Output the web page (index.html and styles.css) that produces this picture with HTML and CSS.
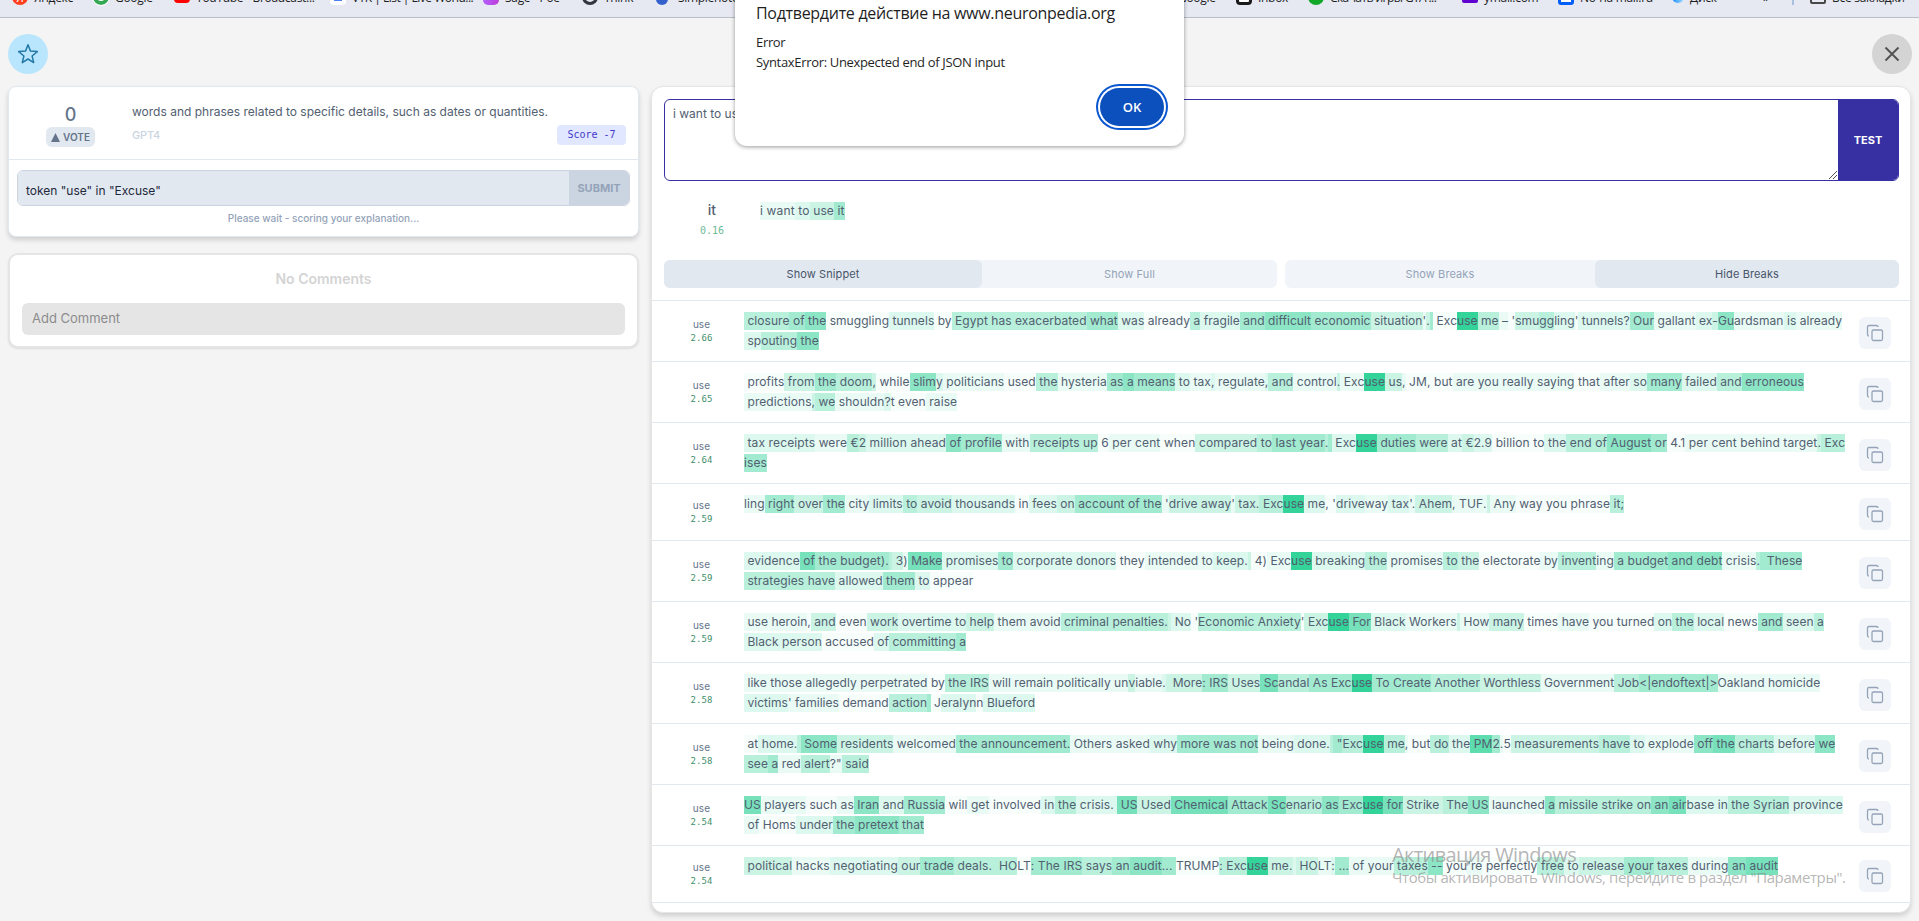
FILE: index.html
```
<!DOCTYPE html>
<html lang="en">
<head>
    <meta charset="UTF-8">
    <meta name="viewport" content="width=device-width, initial-scale=1.0">
    <title>Neuronpedia</title>
    <link rel="stylesheet" href="styles.css">
</head>
<body>
    <div class="bookmarks">
        <span class="mark m1"><i class="dot red">Я</i>Яндекс</span>
        <span class="mark m2"><i class="dot google"></i>Google</span>
        <span class="mark m3"><i class="dot youtube"></i>YouTube - Broadcast...</span>
        <span class="mark m4"><i class="dot vtk"></i>VTK | List | Live World...</span>
        <span class="mark m5"><i class="dot sage"></i>Sage - Poe</span>
        <span class="mark m6"><i class="dot think"></i>Think</span>
        <span class="mark m7"><i class="dot simple"></i>Simplenote</span>
        <span class="mark m8">Google</span>
        <span class="mark m9"><i class="dot inbox"></i>Inbox</span>
        <span class="mark m10"><i class="dot green"></i>Скачать игры GTA ...</span>
        <span class="mark m11"><i class="dot purple"></i>ymail.com</span>
        <span class="mark m12"><i class="dot mail"></i>No-на mail.ru</span>
        <span class="mark m13"><i class="dot disk"></i>Диск</span>
        <span class="mark m14">»</span>
        <span class="mark m15"></span>
        <span class="mark m16"><i class="dot folder"></i>Все закладки</span>
    </div>

    <div class="topbar">
        <button class="round star">
            <svg width="24" height="24" viewBox="0 0 24 24" fill="none" stroke="currentColor" stroke-width="1.5" stroke-linejoin="round"><path d="M12 2.8l2.5 6.3 6.8.5-5.2 4.4 1.6 6.6L12 17l-5.7 3.6 1.6-6.6-5.2-4.4 6.8-.5z"/></svg>
        </button>
        <button class="round close">
            <svg width="24" height="24" viewBox="0 0 24 24" fill="none" stroke="currentColor" stroke-width="1.9"><path d="M5.5 5.5l13 13M18.5 5.5l-13 13"/></svg>
        </button>
    </div>

    <div class="page">
        <div class="left">
            <div class="card explain">
                <div class="explain-top">
                    <div class="votes">
                        <div class="count">0</div>
                        <button class="vote"><svg width="9" height="9" viewBox="0 0 9 9"><path fill="currentColor" d="M4.5 0L9 9H0z"/></svg>VOTE</button>
                    </div>
                    <div class="explain-text">
                        <div class="desc">words and phrases related to specific details, such as dates or quantities.</div>
                        <div class="explain-meta"><span class="author">GPT4</span><span class="score">Score -7</span></div>
                    </div>
                </div>
                <div class="explain-bottom">
                    <div class="submit-row">
                        <div class="field">token "use" in "Excuse"</div>
                        <button class="submit">SUBMIT</button>
                    </div>
                    <div class="wait">Please wait - scoring your explanation...</div>
                </div>
            </div>
            <div class="card comments">
                <div class="no-comments">No Comments</div>
                <div class="add-comment">Add Comment</div>
            </div>
        </div>

        <div class="card right">
            <div class="test-row">
                <div class="test-field">i want to use it
                    <svg class="grip" width="10" height="10" viewBox="0 0 10 10" stroke="#555" stroke-width="1"><path d="M1 9l8-8M5 9l4-4"/></svg>
                </div>
                <button class="test">TEST</button>
            </div>
            <div class="result">
                <div class="result-label"><div class="result-token">it</div><div class="result-value">0.16</div></div>
                <div class="line"><span class="h1">i want</span><span class="h2"> to</span><span class="h3"> use</span><span class="h5"> it</span></div>
            </div>
            <div class="tabs">
                <div class="tab-group first"><button class="on">Show Snippet</button><button>Show Full</button></div>
                <div class="tab-group second"><button>Show Breaks</button><button class="on">Hide Breaks</button></div>
            </div>
            <div id="rows"></div>
        </div>
    </div>

    <div class="dialog">
        <div class="dialog-title">Подтвердите действие на www.neuronpedia.org</div>
        <div class="dialog-text">Error<br>SyntaxError: Unexpected end of JSON input</div>
        <button class="ok">OK</button>
    </div>

    <div class="watermark">
        <div class="watermark-title">Активация Windows</div>
        <div class="watermark-text">Чтобы активировать Windows, перейдите в раздел "Параметры".</div>
    </div>

    <script>
        // each token is its highlight level (0-9) followed by the text, tokens are split by ~
        const rows = [
            ['2.66',
                "4 closure~5 of~6 the~0 smuggling~2 tunnels~0 by~4 Egypt~4 has exacerbated~5 what~2 was~0 already~4 a~2 fragile~5 and~6 difficult~5 economic~3 situation~1'~3.~5 ~0 ~0Exc~9use~4 me~1 –~0 '~3smu~4gg~2ling~0'~2 tunnels?~5 Our~1 gallant~2 ex~3-~6Gu~1ardsman~2 is~1 already",
                "2 sp~4outing~6 the"],
            ['2.65',
                "0 profits~3 from~5 the~4 doom~3,~0 while~6 slim~2y~1 politicians~0 used~4 the~1 hysteria~5 as~6 a~5 means~2 to~1 tax~2,~1 regulate~2,~4 and~1 control~3.~1 Exc~9use~3 us~1,~0 JM,~0 but~1 are you really saying~0 that~1 after~2 so~5 many~2 failed~4 and~6 erroneous",
                "1 predictions~3,~4 we~1 shouldn~2?~0t even~1 raise"],
            ['2.64',
                "2 tax receipts~1 were~4 €~32~2 million ahead~6 of~5 profile~1 with~4 receipts~4 up~0 6~1 per cent~0 when~3 compared~4 to~5 last~5 year~4.~5 ~2 Exc~9use~5 duties~4 were~2 at~3 €~22.9~0 billion~0 to~2 the~4 end of~6 August~5 or~0 4.1~1 per cent~1 behind target~3.~4 Exc",
                "5ises"],
            ['2.59',
                "1ling~5 right~3 over~5 the~1 city~2 limits~4 to~3 avoid~2 thousands~0 in~2 fees~3 on~5 account~5 of~5 the~1 '~3drive away~1'~3 tax.~4 Exc~9use~2 me~0,~0 '~2drive~1way~2 tax~1'.~3 Ahem~1,~1 TUF~1.~3 ~1 Any~0 way you phrase~4 it;"],
            ['2.59',
                "2 evidence~7 of~5 the budget~5).~4 ~3 3~1)~7 Make~2 promises~5 to~2 corporate~2 donors~0 they~1 intended to~2 keep.~3 ~0 4)~1 Exc~9use~2 breaking~4 the~1 promises~4 to~3 the~0 electorate~1 by~4 invent~1ing~5 a~5 budget~6 and debt~1 crisis~4.~5  These",
                "4 strategies~4 have~2 allowed~5 them~2 to~0 appear"],
            ['2.59',
                "1 use heroin~0,~3 and~0 even~3 work~2 overtime~2 to~3 help~1 them~1 avoid~4 criminal~4 penalties.~3 ~2 No~0 '~4Economic~4 Anxiety~0'~3 Exc~9use~7 For~2 Black~1 Workers~3 ~1 How~3 many~0 times~1 have~0 you turned~2 on~4 the~2 local~0 news~5 and~2 seen~4 a",
                "2 Black~2 person~0 accused~2 of~4 committing~5 a"],
            ['2.58',
                "1 like~1 those allegedly perpetrated~0 by~4 the~4 IRS~1 will remain politically~1 un~3v~1iable~2.~3  More~5:~5 IRS~3 Uses~7 Sc~4andal~5 As~5 Exc~9use~5 To~5 Create~4 Another~3 Worthless~1 Government~4 Job~5<|endoftext|>~1Oakland homicide",
                "2 victims~1' families~0 demand~4 action~5 ~0 J~2eralyn~0n~2 Blueford"],
            ['2.58',
                "0 at~2 home.~4 ~6 Some~3 residents~1 welcomed~5 the~5 announcement.~1 Others asked~2 why~5 more~5 was not~1 being~2 done.~4 ~5 \"~4Exc~9use~4 me~1,~0 but~4 do~2 the~8 PM~52~1.~05~3 measurements~4 have~2 to~1 explode~6 off~7 the~4 charts~2 before~6 we",
                "4 see~5 a~1 red~4 alert~1?\"~4 said"],
            ['2.54',
                "7US~1 players~0 such~1 as~6 Iran~2 and~5 Russia~0 will~1 get~0 involved~2 in~4 the~2 crisis.~2 ~7 US~3 Used~7 Chemical~5 Attack~7 Sc~4enario~6 as~5 Exc~9use~7 for~3 Strike~3 ~4 The~6 US~1 launched~6 a~4 missile~4 strike~4 on~6 an~7 air~2base~2 in~4 the~4 Syrian~2 province",
                "1 of~0 Homs~2 under~5 the~6 pretext~5 that"],
            ['2.54',
                "3 political~1 hacks~2 negotiating~3 our~5 trade~4 deals.~4  HO~0LT~5:~5 The IRS~4 says~5 an~6 audit~5...~5 ~0TRUMP~4:~4 Exc~9use~3 me.~2 ~3 HO~1LT~2:~5 ...~1 of your~4 taxes~6 --~0 you~1're~0 perfectly~4 free~2 to~3 release~5 your~4 taxes~1 during~6 an~7 audit"]
        ];
        const copyIcon = '<svg width="18" height="18" viewBox="0 0 24 24" fill="none" stroke="currentColor" stroke-width="1.7" stroke-linejoin="round"><rect x="8" y="8" width="14" height="14" rx="2"/><path d="M4 16c-1.1 0-2-.9-2-2V4c0-1.1.9-2 2-2h10c1.1 0 2 .9 2 2"/></svg>';

        function escapeText(text) {
            return text.replace(/&/g, '&amp;').replace(/</g, '&lt;');
        }

        function makeLine(line) {
            const spans = line.split('~').map(t => '<span class="h' + t[0] + '">' + escapeText(t.slice(1)) + '</span>');
            return '<div class="line">' + spans.join('') + '</div>';
        }

        document.getElementById('rows').innerHTML = rows.map(row =>
            '<div class="row"><div class="act"><div>use</div><div class="value">' + row[0] + '</div></div>' +
            '<div class="snippet">' + row.slice(1).map(makeLine).join('') + '</div>' +
            '<button class="copy">' + copyIcon + '</button></div>'
        ).join('');
    </script>
</body>
</html>
```
FILE: styles.css
```
* {
    box-sizing: border-box;
}
body {
    margin: 0;
    height: 921px;
    overflow: hidden;
    position: relative;
    font-family: Inter, sans-serif;
    font-size: 12px;
    color: #526071;
    background-color: #f4f4f4;
}
button {
    font-family: inherit;
    border: none;
    padding: 0;
    cursor: pointer;
}
/* bookmarks bar, cut by the top of the window */
.bookmarks {
    position: relative;
    height: 18px;
    overflow: hidden;
    background-color: #e6e9f2;
    border-bottom: 1px solid #b9bec6;
    font-family: "Open Sans", "Noto Sans", sans-serif;
    font-size: 12px;
    letter-spacing: -0.3px;
    color: #1f1f1f;
}
.mark {
    position: absolute;
    top: -11px;
    height: 18px;
    line-height: 18px;
    white-space: nowrap;
    display: flex;
    gap: 6px;
}
.m1 { left: 12px; }
.m2 { left: 93px; }
.m3 { left: 174px; }
.m4 { left: 330px; letter-spacing: -0.5px; }
.m5 { left: 483px; }
.m6 { left: 582px; }
.m7 { left: 656px; }
.m8 { left: 1178px; }
.m9 { left: 1236px; }
.m10 { left: 1308px; letter-spacing: -0.6px; }
.m11 { left: 1462px; }
.m12 { left: 1558px; }
.m13 { left: 1672px; }
.m14 { left: 1763px; }
.m15 { left: 1792px; width: 2px; height: 16px; background-color: #a8c0dd; }
.m16 { left: 1810px; }
.dot {
    width: 16px;
    height: 16px;
    border-radius: 8px;
    font-style: normal;
    color: white;
    text-align: center;
    line-height: 17px;
}
.red { background-color: #fc3f1d; }
.google { background-color: white; border: 4px solid #34a853; outline: 1px solid white; }
.youtube { background-color: #ff0000; height: 14px; border-radius: 4px; }
.vtk { background-color: #4f7df5; border: 4px solid white; border-radius: 4px; }
.sage { background: linear-gradient(90deg, #b061ff, #c03bd8); border-radius: 5px; }
.think { background-color: #e6e9f2; border: 3px solid #33363c; }
.simple { background-color: #3361cc; width: 12px; margin-right: 4px; }
.inbox { background-color: white; border: 3px solid #1b1b1b; border-radius: 4px; }
.green { background-color: #12a928; }
.purple { background-color: #6001d2; border-radius: 2px; height: 14px; }
.mail { background-color: white; border: 3px solid #005ff9; border-radius: 3px; }
.disk { background: linear-gradient(90deg, #1a8cff, #a5dcff); width: 12px; height: 14px; }
.folder { border: 2px solid #474747; border-radius: 2px; height: 15px; }

.topbar {
    display: flex;
    justify-content: space-between;
    padding: 16px 7px 12px 8px;
}
.round {
    width: 40px;
    height: 40px;
    border-radius: 20px;
    display: flex;
    align-items: center;
    justify-content: center;
}
.star {
    background-color: #bae6fd;
    color: #2379a5;
}
.close {
    background-color: #d4d4d4;
    color: #525252;
}
.page {
    display: flex;
    gap: 12px;
    align-items: flex-start;
    padding: 0 8px 0 8px;
}
.card {
    background-color: white;
    border: 1px solid #e2e8f0;
    border-radius: 8px;
    box-shadow: 0 3px 5px rgba(0, 0, 0, 0.15);
}
.left {
    width: 631px;
}
.explain {
    height: 151px;
}
.explain-top {
    display: flex;
    height: 73px;
    border-bottom: 1px solid #e2e8f0;
}
.votes {
    width: 123px;
    padding-top: 17px;
    display: flex;
    flex-direction: column;
    align-items: center;
    color: #64748b;
}
.count {
    font-size: 18px;
    line-height: 21px;
    font-weight: 500;
}
.vote {
    margin-top: 2px;
    width: 49px;
    height: 20px;
    border-radius: 6px;
    display: flex;
    align-items: center;
    justify-content: center;
    gap: 3px;
    font-size: 10px;
    font-weight: 600;
    color: #64748b;
    background-color: #e2e8f0;
}
.explain-text {
    flex: 1;
    padding: 15px 12px 0 0;
}
.desc {
    line-height: 20px;
    height: 23px;
    white-space: nowrap;
}
.explain-meta {
    display: flex;
    justify-content: space-between;
    line-height: 20px;
}
.author {
    font-size: 11px;
    font-weight: 500;
    letter-spacing: -0.2px;
    color: #cbd5e1;
}
.score {
    width: 69px;
    height: 20px;
    border-radius: 4px;
    text-align: center;
    font-family: "DejaVu Sans Mono", monospace;
    font-size: 10px;
    color: #4338ca;
    background-color: #e0e7ff;
}
.explain-bottom {
    padding: 10px 8px;
}
.submit-row {
    display: flex;
    height: 36px;
    border: 1px solid #cbd5e1;
    border-radius: 6px;
    overflow: hidden;
}
.field {
    flex: 1;
    padding-left: 8px;
    line-height: 39px;
    color: #1e293b;
    background-color: #e2e8f0;
}
.submit {
    width: 60px;
    font-size: 11px;
    font-weight: 700;
    color: #94a3b8;
    background-color: #cbd5e1;
}
.wait {
    padding-top: 4px;
    text-align: center;
    font-size: 10px;
    line-height: 16px;
    font-weight: 500;
    color: #94a3b8;
}
.comments {
    margin-top: 16px;
    height: 95px;
    padding: 14px 12px 0;
    border: 2px solid #e5e5e5;
    border-radius: 10px;
    box-shadow: 0 1px 2px rgba(0, 0, 0, 0.1);
}
.no-comments {
    height: 34px;
    line-height: 20px;
    text-align: center;
    font-size: 14px;
    font-weight: 600;
    color: #d4d4d4;
}
.add-comment {
    height: 32px;
    line-height: 31px;
    padding-left: 10px;
    border-radius: 6px;
    font-size: 13px;
    color: #8c8c8c;
    background-color: #e5e5e5;
}
.right {
    width: 1260px;
    height: 827px;
    border-color: #e5e5e5;
    border-radius: 12px;
}
.test-row {
    display: flex;
    height: 82px;
    margin: 12px 11px 0 12px;
    border: 1px solid #3730a3;
    border-radius: 6px;
    overflow: hidden;
}
.test-field {
    flex: 1;
    position: relative;
    padding: 5px 8px;
    line-height: 18px;
}
.grip {
    position: absolute;
    right: 0;
    bottom: 0;
}
.test {
    width: 60px;
    font-size: 11px;
    font-weight: 700;
    color: white;
    background-color: #3730a3;
}
.result {
    display: flex;
    height: 79px;
    padding-top: 20px;
}
.result .line {
    letter-spacing: 0.15px;
}
.result-label {
    width: 108px;
    padding-left: 12px;
    text-align: center;
}
.result-token {
    font-size: 14px;
    line-height: 18px;
    font-weight: 500;
}
.result-value {
    margin-top: 3px;
    font-family: "DejaVu Sans Mono", monospace;
    font-size: 10px;
    line-height: 18px;
    color: #6cba98;
}
.tabs {
    display: flex;
    gap: 8px;
    height: 40px;
    margin: 0 11px 0 12px;
}
.tab-group {
    display: flex;
    height: 28px;
    border-radius: 6px;
    background-color: #f1f5f9;
}
.tab-group button {
    flex: 1;
    border-radius: 6px;
    font-size: 11px;
    font-weight: 400;
    letter-spacing: 0.1px;
    color: #94a3b8;
    background-color: transparent;
}
.tab-group .on {
    color: #475569;
    background-color: #e2e8f0;
}
.first {
    width: 613px;
}
.first .on {
    flex: 0 0 318px;
}
.second {
    flex: 1;
}
.second .on {
    flex: 0 0 304px;
}
.row {
    display: flex;
    align-items: center;
    border-top: 1px solid #e2e8f0;
    letter-spacing: 0.08px;
}
.row:last-child {
    border-bottom: 1px solid #e2e8f0;
    letter-spacing: 0.1px;
}
.row:nth-child(1),
.row:nth-child(6),
.row:nth-child(7) {
    letter-spacing: 0.05px;
}
.row:nth-child(3) {
    letter-spacing: 0.12px;
}
.act {
    flex: none;
    width: 92px;
    padding-left: 7px;
    text-align: center;
    font-size: 10px;
    line-height: 14px;
    color: #64748b;
}
.value {
    font-family: "DejaVu Sans Mono", monospace;
    font-size: 9px;
    color: #3f8f6c;
}
.snippet {
    flex: 1;
    min-width: 0;
    align-self: flex-start;
    padding: 10px 0;
}
.line {
    height: 20px;
    line-height: 20px;
    white-space: pre;
}
.line span {
    display: inline-block;
    height: 18px;
    line-height: 18px;
}
.copy {
    flex: none;
    width: 32px;
    height: 32px;
    margin: 14px 19px 10px 0;
    border-radius: 6px;
    display: flex;
    align-items: center;
    justify-content: center;
    color: #94a3b8;
    background-color: #f1f5f9;
}
/* activation levels */
.h0 { background-color: rgba(52, 211, 153, 0.04); }
.h1 { background-color: rgba(52, 211, 153, 0.1); }
.h2 { background-color: rgba(52, 211, 153, 0.17); }
.h3 { background-color: rgba(52, 211, 153, 0.25); }
.h4 { background-color: rgba(52, 211, 153, 0.35); }
.h5 { background-color: rgba(52, 211, 153, 0.46); }
.h6 { background-color: rgba(52, 211, 153, 0.57); }
.h7 { background-color: rgba(52, 211, 153, 0.67); }
.h8 { background-color: rgba(52, 211, 153, 0.8); }
.h9 { background-color: rgba(52, 211, 153, 1); }

.dialog {
    position: absolute;
    left: 735px;
    top: -10px;
    width: 449px;
    height: 156px;
    padding: 10px 21px;
    border-radius: 0 0 12px 12px;
    background-color: white;
    box-shadow: 0 1px 4px rgba(0, 0, 0, 0.4);
    font-family: "Open Sans", "Noto Sans", sans-serif;
    color: #1f1f1f;
}
.dialog-title {
    font-size: 16px;
    line-height: 26px;
    letter-spacing: -0.3px;
    white-space: nowrap;
}
.dialog-text {
    padding-top: 6px;
    font-size: 13px;
    line-height: 20px;
    letter-spacing: -0.33px;
}
.ok {
    position: absolute;
    right: 20px;
    bottom: 20px;
    width: 64px;
    height: 38px;
    border-radius: 19px;
    font-size: 13px;
    font-weight: 600;
    color: white;
    background-color: #0b50bd;
    box-shadow: 0 0 0 2px white, 0 0 0 4px #0b57d0;
}
.watermark {
    position: absolute;
    left: 1392px;
    top: 842px;
    white-space: nowrap;
    font-family: "Open Sans", "Noto Sans", sans-serif;
    color: rgba(140, 140, 140, 0.65);
}
.watermark-title {
    font-size: 20px;
    line-height: 26px;
    letter-spacing: -0.6px;
}
.watermark-text {
    font-size: 15px;
    line-height: 19px;
    letter-spacing: -0.4px;
}
```
